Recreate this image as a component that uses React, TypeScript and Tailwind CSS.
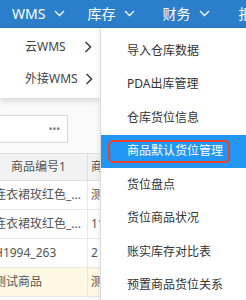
const FONT = "font-['Noto_Sans','Noto_Sans_CJK_SC',sans-serif]";

function NavChevron() {
  return (
    <svg width="11" height="7" viewBox="0 0 11 7" fill="none">
      <path d="M1 1l4.5 4.5L10 1" stroke="white" strokeWidth="1.3" />
    </svg>
  );
}

function SubChevron() {
  return (
    <svg width="8" height="12" viewBox="0 0 8 12" fill="none">
      <path d="M1.5 1l5 5-5 5" stroke="#444" strokeWidth="1.6" />
    </svg>
  );
}

const stockItems = [
  "导入仓库数据",
  "PDA出库管理",
  "仓库货位信息",
  "商品默认货位管理",
  "货位盘点",
  "货位商品状况",
  "账实库存对比表",
  "预置商品货位关系",
];

const rows = [
  { name: "连衣裙玫红色_...", second: "测", bg: "bg-white" },
  { name: "连衣裙玫红色_...", second: "11", bg: "bg-white" },
  { name: "H1994_263", second: "2", bg: "bg-white" },
  { name: "测试商品", second: "测", bg: "bg-[#fdf7e3]" },
];

export default function App() {
  return (
    <div className={`w-[246px] h-[300px] overflow-hidden bg-[#fafafa] ${FONT}`}>
      {/* TOP NAV */}
      <header className="h-[28px] bg-[#2b7fca] border-b border-[#2672b8] flex items-center text-white text-[14px] whitespace-nowrap">
        <div className="flex items-center gap-[9px] ml-[12px]">
          <span>WMS</span>
          <NavChevron />
        </div>
        <div className="flex items-center gap-[9px] ml-[22px]">
          <span>库存</span>
          <NavChevron />
        </div>
        <div className="flex items-center gap-[9px] ml-[27px]">
          <span>财务</span>
          <NavChevron />
        </div>
        <div className="ml-[28px]">报表</div>
      </header>

      <main className="relative">
        {/* PAGE CONTENT */}
        <div className="pt-[87px] -ml-[14px]">
          <div className="h-[28px] w-[82px] bg-white border border-[#d9d9d9] flex items-center justify-end pr-[7px] text-[10px] text-[#777] leading-none">
            •••
          </div>

          <div className="mt-[10px] text-[12px] text-[#555]">
            <div className="flex h-[28px] bg-[#f2f2f2] border-y border-[#dedede]">
              <div className="w-[102px] flex items-center justify-center pl-[4px] border-r border-[#dedede]">商品编号1</div>
              <div className="flex-1 flex items-center pl-[3px]">商品名称</div>
            </div>
            {rows.map((r, i) => (
              <div key={i} className={`flex h-[29px] border-b border-[#e8e8e8] ${r.bg}`}>
                <div className="w-[102px] flex items-center pl-[8px] border-r border-[#e8e8e8] overflow-hidden whitespace-nowrap">
                  {r.name}
                </div>
                <div className="flex-1 flex items-center pl-[3px]">{r.second}</div>
              </div>
            ))}
          </div>
        </div>

        {/* WMS SUBMENU */}
        <div className="absolute left-0 top-0 w-[100px] bg-white pt-[3px] pb-[3px] shadow-[0_3px_6px_rgba(0,0,0,0.15)] text-[12px] text-[#444]">
          <div className="h-[32px] flex items-center justify-between pl-[25px] pr-[8px]">
            <span>云WMS</span>
            <SubChevron />
          </div>
          <div className="h-[32px] flex items-center justify-between pl-[25px] pr-[7px]">
            <span>外接WMS</span>
            <SubChevron />
          </div>
        </div>

        {/* STOCK MENU */}
        <div className="absolute left-[100px] top-0 w-[160px] h-[300px] bg-white border-l border-[#dcdcdc] shadow-[-2px_0_4px_rgba(0,0,0,0.06)] pt-[6px] text-[12px] text-[#333]">
          {stockItems.map((label, i) =>
            i === 3 ? (
              <div key={label} className="relative h-[33.5px] flex items-center pl-[26px] bg-[#2196f3] text-white">
                {label}
                <div className="absolute top-[5px] bottom-[5px] left-[7px] w-[122px] border-2 border-[#e8412c] rounded-[5px]" />
              </div>
            ) : (
              <div key={label} className="h-[33.5px] flex items-center pl-[26px]">
                {label}
              </div>
            )
          )}
        </div>
      </main>
    </div>
  );
}
